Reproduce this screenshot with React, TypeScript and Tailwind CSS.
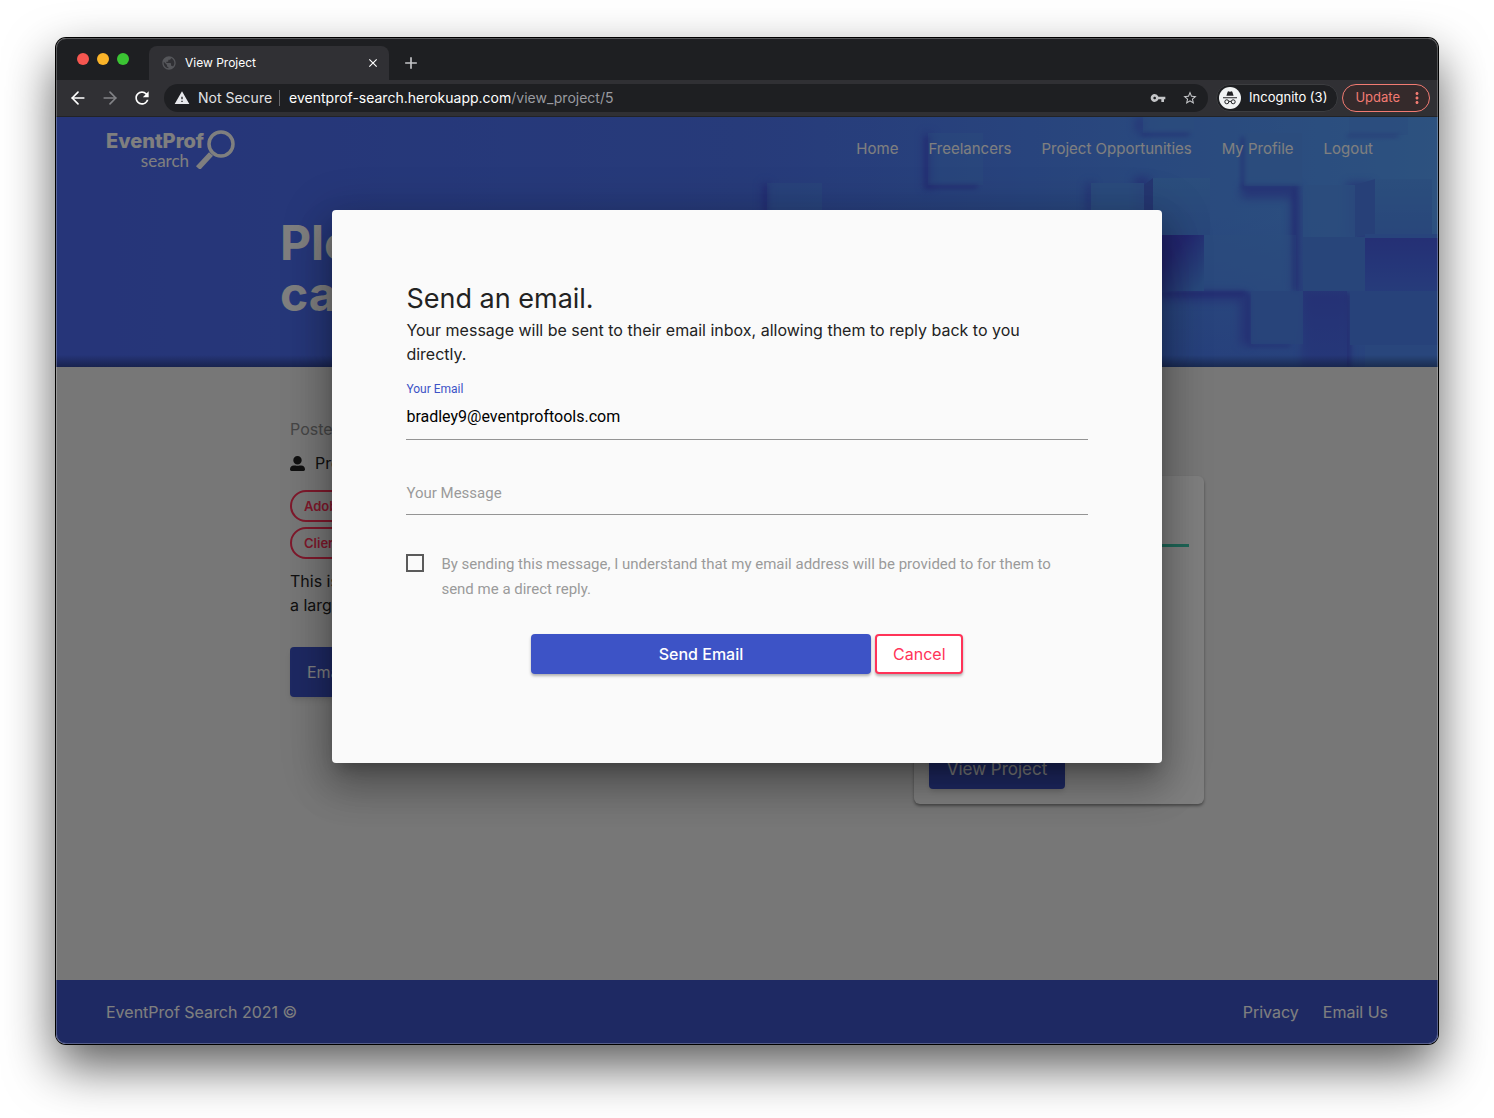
import React from "react";
import { ArrowLeft, ArrowRight } from "lucide-react";
import { MdVpnKey, MdStarBorder, MdMoreVert, MdRefresh, MdWarning, MdClose, MdAdd, MdPublic } from "react-icons/md";
import { FaUserAlt } from "react-icons/fa";

function IncognitoIcon() {
  return (
    <svg viewBox="0 0 22 22" className="size-[22px]" aria-hidden="true">
      <circle cx="11" cy="11" r="11" fill="#f1f3f4" />
      <path d="M7.4 8.800 8.600 4.900c.2-.6.8-.7 1.200-.5l1.200.4 1.200-.4c.4-.2 1 0 1.200.5l1.200 3.900z" fill="#202124" />
      <path d="M4 10.200h14v1.100H4z" fill="#202124" />
      <g fill="none" stroke="#202124" strokeWidth="1">
        <circle cx="7.800" cy="14.800" r="2" />
        <circle cx="14.200" cy="14.800" r="2" />
        <path d="M9.800 14.600q1.200-.8 2.400 0" />
      </g>
    </svg>
  );
}

function BrowserChrome() {
  return (
    <header className="font-['Inter',sans-serif] text-white">
      <div className="flex h-[42px] items-end bg-[#1e1f22]">
        <div className="flex h-full w-[93px] items-center gap-2 pl-[21px]">
          <span className="size-3 rounded-full bg-[#f65650]" />
          <span className="size-3 rounded-full bg-[#fbb429]" />
          <span className="size-3 rounded-full bg-[#3bc433]" />
        </div>
        <div className="flex h-[34px] w-60 items-center rounded-t-lg bg-[#303034] px-3">
          <MdPublic className="size-4 text-[#55565a]" />
          <span className="ml-2 flex-1 text-xs">View Project</span>
          <button aria-label="Close tab"><MdClose className="-mr-[3px] size-[14px]" /></button>
        </div>
        <button aria-label="New tab" className="ml-3 flex h-[34px] items-center text-[#c4c5c8]"><MdAdd className="size-5" /></button>
      </div>
      <div className="flex h-[37px] items-center border-b border-[#222326] bg-[#303034] pr-2 pl-3">
        <button aria-label="Back"><ArrowLeft className="size-5" /></button>
        <button aria-label="Forward" className="ml-3 text-[#828387]"><ArrowRight className="size-5" /></button>
        <button aria-label="Reload" className="ml-3"><MdRefresh className="size-5" /></button>
        <div className="ml-3 flex h-7 flex-1 items-center rounded-full bg-[#1e1f22] pr-2.5 pl-2.5 text-sm">
          <MdWarning className="size-4 text-[#e8e9ec]" />
          <span className="ml-2 text-[#e1e2e5]">Not Secure</span>
          <span className="mr-[9px] ml-[7px] h-4 w-px bg-[#68696d]" />
          <span className="flex-1">eventprof-search.herokuapp.com<span className="text-[#9a9ba0]">/view_project/5</span></span>
          <button aria-label="Saved passwords" className="text-[#c4c5c8]"><MdVpnKey className="size-4" /></button>
          <button aria-label="Bookmark this page" className="ml-4 text-[#c4c5c8]"><MdStarBorder className="size-4" /></button>
        </div>
        <button className="ml-2 flex h-7 items-center gap-2 rounded-full border border-[#3c3d40] bg-[#1e1f22] pr-2.5 pl-0.5 text-[13px]">
          <IncognitoIcon />
          Incognito (3)
        </button>
        <button className="ml-1 flex h-7 items-center rounded-full border border-[#f27b72] bg-[#352a2b] pr-[3px] pl-3 text-[13px] text-[#f27b72]">
          Update
          <MdMoreVert className="ml-2 size-[18px]" />
        </button>
      </div>
    </header>
  );
}

function HeroArt() {
  return (
    <svg viewBox="0 0 698 250" preserveAspectRatio="xMaxYMin slice" className="absolute inset-y-0 right-0 h-full w-[698px]" aria-hidden="true">
      <defs>
        <linearGradient id="fade" x1="0" x2="1" y1="0" y2="0">
          <stop offset="0" stopColor="#5088fc" stopOpacity="0" />
          <stop offset=".6" stopColor="#5498fe" stopOpacity=".8" />
          <stop offset="1" stopColor="#5aa4ff" />
        </linearGradient>
        <linearGradient id="lower" x1="0" x2="0" y1="0" y2="1">
          <stop offset=".4" stopColor="#4c78f0" stopOpacity="0" />
          <stop offset="1" stopColor="#4c78f8" stopOpacity=".7" />
        </linearGradient>
        <linearGradient id="corner" x1="0" x2="1" y1="0" y2="1">
          <stop offset="0" stopColor="#4348d8" />
          <stop offset=".3" stopColor="#464ee0" />
          <stop offset=".9" stopColor="#5090f8" />
        </linearGradient>
        <linearGradient id="down" x1="0" x2="0" y1="0" y2="1">
          <stop offset="0" stopColor="#4a60ea" />
          <stop offset=".5" stopColor="#4b6cf2" />
          <stop offset="1" stopColor="#4d78f6" />
        </linearGradient>
        <linearGradient id="face" x1="0" x2="0" y1="0" y2="1">
          <stop offset="0" stopColor="#569cfa" />
          <stop offset="1" stopColor="#528ef6" />
        </linearGradient>
        <filter id="soft" x="-20%" y="-20%" width="140%" height="140%"><feGaussianBlur stdDeviation="5" /></filter>
        <filter id="edge" x="-20%" y="-20%" width="140%" height="140%"><feGaussianBlur stdDeviation="2" /></filter>
      </defs>
      <rect width="698" height="250" fill="url(#fade)" />
      <rect width="698" height="250" fill="url(#lower)" />
      <g fill="#4a5ae6" filter="url(#soft)" opacity=".75">
        <path d="M22 66h8v30h-8zM346 66h8v30h-8zM394 60h16v40h-16zM396 0h8v16h-8zM501 69h58v12h-58zM551 75h10v100h-10zM607 66h26v56h-26zM563 174h46v76h-46zM500 176h10v52h-10zM420 174h86v10h-86zM184 16h8v56h-8z" />
      </g>
      <g fill="#5698fa">
        <path d="M188 16h55v52h-55z" opacity=".4" />
        <path d="M27 66h55v30H27z" opacity=".4" />
        <path d="M403 0h51v16h-51zM609 0h59v18h-59z" opacity=".6" />
        <path d="M504 16h58v53h-58zM351 66h53v30h-53z" opacity=".8" />
        <path d="M464 118h92v56h-92z" opacity=".45" />
        <path d="M563 68h54v52h-54z" opacity=".85" />
      </g>
      <g fill="#434bdc" filter="url(#edge)" opacity=".6">
        <path d="M185 20h3v48h52l-5 4h-50zM24 70l3-4v30h-3zM403 16h49l-5 3h-47zM609 18h52l-5 2h-50zM511 227h42l-5 3h-41zM507 176h3v51h-3zM504 69h56v3h-58zM501 20h3v52h-3zM606 176h4v74h-4zM553 72h3v102h-3z" />
        <path d="M420 174h86v5h-86z" />
      </g>
      <path d="M420 118h44v56h-44z" fill="url(#corner)" />
      <path d="M625 121h73v54h-73z" fill="url(#down)" />
      <path d="M563 174h44v76h-44z" fill="url(#down)" opacity=".6" />
      <path d="M563 120h62v54h-62z" fill="#508af4" />
      <path d="M511 174h52v53h-52z" fill="#5088f4" opacity=".8" />
      <path d="M610 174h88v54h-88z" fill="#4f84f4" />
      <path d="M625 228h73v22h-73z" fill="#528cf8" />
      <path d="M413 61h57v57h-57z" fill="url(#face)" />
      <path d="m404 68 9-7v57h-9z" fill="#4a6ce2" />
      <path d="M635 62h57v55h-57z" fill="url(#face)" />
      <path d="m615 68 20-6v55l-20 3z" fill="#4f80f0" />
      <path d="M625 117h73v4h-73z" fill="#5088f8" />
    </svg>
  );
}

function Logo() {
  return (
    <a href="#home" aria-label="EventProf search" className="flex items-start">
      <span className="flex flex-col items-end">
        <span className="font-['Inter',sans-serif] text-[20px] leading-6 font-extrabold">EventProf</span>
        <span className="mr-[15px] font-['Lato',sans-serif] text-[17px] leading-4">search</span>
      </span>
      <svg viewBox="0 0 40 40" className="-ml-[9px] size-10" fill="none" stroke="currentColor" aria-hidden="true">
        <circle cx="26" cy="15" r="12" strokeWidth="3.500" />
        <path d="m16 25-13 14" strokeWidth="5.500" />
      </svg>
    </a>
  );
}

const navLinks = ["Home", "Freelancers", "Project Opportunities", "My Profile", "Logout"];

function Hero() {
  return (
    <section className="relative h-[250px] bg-linear-to-r from-[#4c6af2] to-[#5082f8] text-white">
      <HeroArt />
      <div className="absolute inset-x-0 bottom-0 h-3 bg-linear-to-t from-black/35 to-transparent" />
      <div className="relative">
        <nav className="flex h-16 items-start justify-between pt-3 pr-[65px] pl-[50px]">
          <Logo />
          <ul className="flex gap-[30px] pt-2 text-[15px] leading-6">
            {navLinks.map((label) => (
              <li key={label}><a href="#nav">{label}</a></li>
            ))}
          </ul>
        </nav>
        <h1 className="mx-auto mt-9 w-full max-w-[934px] text-5xl leading-[51px] font-bold">Ple<br />ca</h1>
      </div>
    </section>
  );
}

function Chip({ children }: { children: React.ReactNode }) {
  return <span className="flex h-8 items-center rounded-full border-2 border-[#ff3358] px-3 text-[13px] font-semibold text-[#ff3358]">{children}</span>;
}

function ProjectDetails() {
  return (
    <main className="mx-auto flex w-full max-w-[934px] flex-1 items-start justify-between px-2.5 text-base leading-6 text-[#222]">
      <div className="pt-[50px]">
        <p className="text-[#8c8c8c]">Posted</p>
        <p className="mt-2.5 flex items-center gap-2.5"><FaUserAlt className="size-[15px] text-[#222]" />Project</p>
        <div className="mt-[15px] flex flex-col items-start gap-[5px]">
          <Chip>Adobe</Chip>
          <Chip>Client</Chip>
        </div>
        <p className="mt-2.5">This is<br />a large</p>
        <button className="mt-[30px] h-[50px] rounded bg-[#3d53c6] px-[17px] text-white shadow-md">Email</button>
      </div>
      <aside className="mt-[109px] flex h-[328px] w-[290px] flex-col justify-between rounded-md bg-white p-[15px] shadow-[0_2px_3px_rgba(0,0,0,0.4)]">
        <hr className="mt-[53px] border-0 border-t-3 border-[#3fcfb0]" />
        <button className="h-10 w-[136px] self-start rounded bg-[#3d53c6] text-[17px] text-white shadow-md">View Project</button>
      </aside>
    </main>
  );
}

function EmailDialog() {
  return (
    <form role="dialog" aria-labelledby="dialog-title" className="absolute top-[10%] left-1/5 w-3/5 rounded bg-[#fafafa] px-[74px] pt-[72px] pb-[89px] text-[#222] shadow-[0_24px_38px_3px_rgba(0,0,0,0.2),0_9px_46px_8px_rgba(0,0,0,0.18),0_11px_15px_-7px_rgba(0,0,0,0.25)]">
      <h2 id="dialog-title" className="text-[27px] leading-[34px]">Send an email.</h2>
      <p className="mt-0.5 text-base leading-6">Your message will be sent to their email inbox, allowing them to reply back to you<br />directly.</p>
      <div className="font-['Roboto',sans-serif]">
        <label htmlFor="email" className="mt-[15px] block text-xs leading-4 text-[#3d53c6]">Your Email</label>
        <input id="email" type="email" defaultValue="bradley9@eventproftools.com" className="block h-[43px] w-full border-b border-[#949494] pb-0.5 text-base text-black outline-none" />
        <label htmlFor="message" className="sr-only">Your Message</label>
        <textarea id="message" rows={1} placeholder="Your Message" className="mt-8 block h-[43px] w-full resize-none overflow-hidden border-b border-[#949494] py-[9px] text-[15px] leading-6 outline-none placeholder:text-[#9a9a9a]" />
        <label className="mt-[37px] flex items-start gap-[17px] pr-4 text-[15px] leading-[25px] text-[#9a9a9a]">
          <input type="checkbox" className="mt-0.5 size-[18px] shrink-0 appearance-none border-2 border-[#5a5a5a] checked:bg-[#3d53c6]" />
          <span>By sending this message, I understand that my email address will be provided to for them to send me a direct reply.</span>
        </label>
      </div>
      <div className="mt-8 flex justify-center gap-1 text-base">
        <button type="submit" className="h-10 w-1/2 rounded bg-[#3d53c6] font-medium text-white shadow-[0_2px_3px_rgba(0,0,0,0.3)]">Send Email</button>
        <button type="button" className="h-10 w-[88px] rounded border-2 border-[#ff3358] bg-white text-[#ff3358] shadow-[0_2px_3px_rgba(0,0,0,0.3)]">Cancel</button>
      </div>
    </form>
  );
}

export default function App() {
  return (
    <div className="flex min-h-screen flex-col bg-white px-14 pt-[38px] pb-[74px]">
      <div className="flex flex-1 flex-col rounded-[10px] shadow-[0_0_0_1px_#000,0_22px_50px_rgba(0,0,0,0.65)]">
        <div className="relative flex flex-1 flex-col overflow-hidden rounded-[10px]">
          <BrowserChrome />
          <div className="relative flex flex-1 flex-col bg-[#eee] font-['Inter',sans-serif]">
            <Hero />
            <ProjectDetails />
            <footer className="flex h-16 items-center justify-between bg-[#3d53c6] px-[50px] text-base text-white">
              <span>EventProf Search 2021 ©</span>
              <span className="flex gap-6"><a href="#privacy">Privacy</a><a href="#email">Email Us</a></span>
            </footer>
            <div className="absolute inset-0 bg-black/50" />
            <EmailDialog />
          </div>
          <div className="pointer-events-none absolute inset-0 rounded-[10px] border border-white/25" />
        </div>
      </div>
    </div>
  );
}
